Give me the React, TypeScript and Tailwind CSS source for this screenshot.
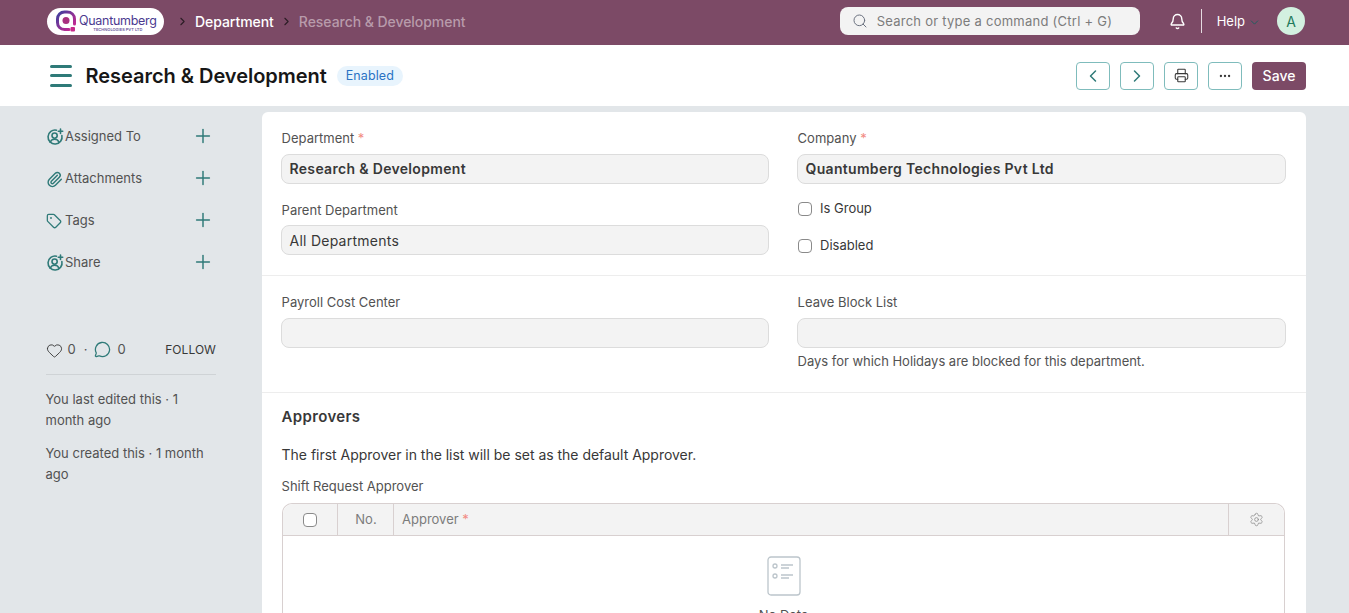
import React from "react"
import { Bell, ChevronDown, ChevronLeft, ChevronRight, MessageCircle, Heart, Paperclip, Plus, Printer, Search, Settings, Tag, Ellipsis } from "lucide-react"

const UserPlus = () => (
    <svg width="18" height="18" viewBox="0 0 18 18" fill="none" stroke="#2f7a78" strokeWidth="1.6" strokeLinecap="round" className="shrink-0">
        <path d="M10.5 2.2A7 7 0 1 0 15.9 7.6" />
        <circle cx="8.6" cy="7.6" r="2.6" />
        <path d="M4.2 14.2c.8-1.9 2.5-2.9 4.4-2.9s3.600 1 4.400 2.900" />
        <path d="M14.500 1v4.400M12.300 3.200h4.400" />
    </svg>
)

const Logo = () => (
    <div className="flex h-[27px] w-[117px] items-center rounded-full bg-white pl-[8px]">
        <svg width="24" height="24" viewBox="0 0 24 24" fill="none" className="shrink-0">
            <defs>
                <linearGradient id="logoQ" x1="0" y1="0" x2="1" y2="1">
                    <stop offset="0" stopColor="#3b3f9e" />
                    <stop offset="1" stopColor="#d6268f" />
                </linearGradient>
            </defs>
            <path d="M14 20.500H9.500C5.500 20.500 2.500 17.500 2.500 13.500V10C2.500 6 5.500 3 9.500 3H12C16.500 3 19.500 6 19.500 10V15" stroke="url(#logoQ)" strokeWidth="3" strokeLinecap="round" />
            <circle cx="11" cy="11.500" r="3.500" fill="#a8307f" />
            <rect x="15.500" y="18" width="4.500" height="4.500" rx="1" fill="#c72a8a" />
        </svg>
        <div className="mt-[3px] flex flex-col items-center">
            <span className="text-[12.5px] leading-[13px] tracking-[-0.3px] text-[#4b3a8f]">Quantumberg</span>
            <span className="text-[4px] leading-[5px] font-semibold whitespace-nowrap text-[#6b5aa0]">TECHNOLOGIES PVT LTD</span>
        </div>
    </div>
)

const Navbar = () => (
    <div className="flex h-[45px] items-center bg-[#7c4a66] pb-[3px] pl-[47px] pr-[44px]">
        <Logo />
        <ChevronRight size={13} strokeWidth={2} className="ml-[12px] text-[#2b1c25]" />
        <span className="ml-[6px] text-[14px] font-medium tracking-[-0.05px] text-white">Department</span>
        <ChevronRight size={13} strokeWidth={2} className="ml-[6px] text-[#2b1c25]" />
        <span className="ml-[6px] text-[14px] font-medium tracking-[-0.05px] text-[#b89bab]">Research &amp; Development</span>

        <div className="ml-auto flex h-[28px] w-[300px] items-center rounded-lg bg-[#f3f3f3] pl-[12px]">
            <Search size={16} strokeWidth={1.5} className="text-[#6b7280]" />
            <span className="ml-[9px] pt-[1px] text-[13px] tracking-[0.25px] text-[#7c7c7c]">Search or type a command (Ctrl + G)</span>
        </div>
        <Bell size={17} strokeWidth={2} className="ml-[29px] text-white" />
        <div className="ml-[15px] h-[24px] w-px bg-white/80"></div>
        <span className="ml-[15px] pt-[1px] text-[13px] text-white">Help</span>
        <ChevronDown size={13} strokeWidth={1.8} className="ml-[3px] mt-[3px] text-[#1f5f60]" />
        <div className="ml-[16px] flex h-[28px] w-[28px] items-center justify-center rounded-full bg-[#d3f0e0] text-[14px] text-[#1f7a5c]">A</div>
    </div>
)

const ActionButton = ({ children }: { children: React.ReactNode }) => (
    <button className="flex h-[28px] w-[34px] items-center justify-center rounded-[4px] border border-[#7fbcbc] bg-white text-[#2f7a78]">
        {children}
    </button>
)

const PageHeader = () => (
    <div className="flex h-[61px] items-center bg-white pl-[50px] pr-[43px]">
        <div className="flex h-[22px] w-[22px] flex-col justify-between">
            <div className="h-[3px] rounded-full bg-[#2f7a78]"></div>
            <div className="h-[3px] rounded-full bg-[#2f7a78]"></div>
            <div className="h-[3px] rounded-full bg-[#2f7a78]"></div>
        </div>
        <h1 className="ml-[13.5px] text-[20px] font-semibold tracking-[-0.03px] text-[#171717]">Research &amp; Development</h1>
        <span className="ml-[10px] flex h-[20px] w-[66px] items-center justify-center rounded-full bg-[#e8f4fd] pt-[1px] text-[12.5px] tracking-[0.1px] text-[#2a72c4]">Enabled</span>

        <div className="ml-auto flex items-center gap-[10px]">
            <ActionButton><ChevronLeft size={20} strokeWidth={1.8} /></ActionButton>
            <ActionButton><ChevronRight size={20} strokeWidth={1.8} /></ActionButton>
            <ActionButton><Printer size={15} strokeWidth={1.7} className="text-[#383838]" /></ActionButton>
            <ActionButton><Ellipsis size={14} strokeWidth={2} className="text-[#383838]" /></ActionButton>
            <button className="h-[28px] w-[54px] rounded-[4px] bg-[#7c4a66] text-[14px] font-medium text-white">Save</button>
        </div>
    </div>
)

const SidebarRow = ({ icon, label }: { icon: React.ReactNode; label: string }) => (
    <div className="flex h-[42px] items-center">
        <div className="flex w-[19px] justify-start">{icon}</div>
        <span className="ml-[0.5px] text-[13px] text-[#525252]">{label}</span>
        <Plus size={22} strokeWidth={1.6} className="ml-auto mr-[2px] -translate-y-px text-[#2f7a78]" />
    </div>
)

const Sidebar = () => (
    <div className="w-[262px] shrink-0 pl-[45.5px] pr-[46px] pt-[4px]">
        <SidebarRow icon={<UserPlus />} label="Assigned To" />
        <SidebarRow icon={<Paperclip size={17} strokeWidth={2} className="text-[#2f7a78]" />} label="Attachments" />
        <SidebarRow icon={<Tag size={16} strokeWidth={1.9} className="text-[#2f7a78]" />} label="Tags" />
        <SidebarRow icon={<UserPlus />} label="Share" />

        <div className="mt-[54px] flex h-[24px] items-center">
            <Heart size={17} strokeWidth={1.3} className="text-[#383838]" />
            <span className="ml-[5px] text-[13px] text-[#525252]">0</span>
            <span className="ml-[8px] text-[13px] text-[#525252]">·</span>
            <MessageCircle size={17} strokeWidth={1.8} className="ml-[7px] -translate-y-px text-[#2f7a78]" />
            <span className="ml-[6px] text-[13px] text-[#525252]">0</span>
            <span className="ml-auto text-[12px] tracking-[0.05px] text-[#383838]">FOLLOW</span>
        </div>
        <div className="mt-[12px] border-t border-[#cfd3d6]"></div>
        <p className="mt-[14px] text-[13px] leading-[20.8px] text-[#525252]">You last edited this · 1 month ago</p>
        <p className="mt-[12.5px] text-[13px] leading-[20.8px] text-[#525252]">You created this · 1 month ago</p>
    </div>
)

const Label = ({ text, required }: { text: string; required?: boolean }) => (
    <div className="h-[18px] pl-[0.6px] text-[13px] leading-[18px] text-[#525252]">
        {text}
        {required && <span className="text-[#f28b82]"> *</span>}
    </div>
)

const Input = ({ value, bold, tight }: { value?: string; bold?: boolean; tight?: boolean }) => (
    <div className={`flex h-[30px] items-center rounded-lg border border-[#dcdcdc] bg-[#f3f3f3] px-[7.5px] text-[14px] text-[#383838] ${tight ? "mt-[6px]" : "mt-[7px]"} ${bold ? "pb-[1px] font-semibold tracking-[0.32px]" : "tracking-[0.25px]"}`}>
        {value}
    </div>
)

const CheckRow = ({ label }: { label: string }) => (
    <div className="flex h-[18px] items-center pl-[1px]">
        <div className="h-[14px] w-[14px] rounded-[4px] border border-[#8a8a8a] bg-white"></div>
        <span className="ml-[8px] text-[13px] text-[#383838]">{label}</span>
    </div>
)

const DetailsSection = () => (
    <div className="grid h-[164px] grid-cols-[488px_489px] gap-x-[28px] border-b border-[#ededed] pl-[19px] pt-[17px]">
        <div>
            <Label text="Department" required />
            <Input value="Research & Development" bold />
            <div className="mt-[17px]">
                <Label text="Parent Department" />
                <Input value="All Departments" tight />
            </div>
        </div>
        <div>
            <Label text="Company" required />
            <Input value="Quantumberg Technologies Pvt Ltd" bold />
            <div className="mt-[16px]"><CheckRow label="Is Group" /></div>
            <div className="mt-[19px]"><CheckRow label="Disabled" /></div>
        </div>
    </div>
)

const CostSection = () => (
    <div className="grid h-[117px] grid-cols-[488px_489px] gap-x-[28px] border-b border-[#ededed] pl-[19px] pt-[17px]">
        <div>
            <Label text="Payroll Cost Center" />
            <Input />
        </div>
        <div>
            <Label text="Leave Block List" />
            <Input />
            <p className="mt-[4px] pl-[0.6px] text-[13px] leading-[18px] tracking-[-0.03px] text-[#525252]">Days for which Holidays are blocked for this department.</p>
        </div>
    </div>
)

const ApproversSection = () => (
    <div className="pl-[19px] pr-[20px] pt-[14px]">
        <h2 className="pl-[0.6px] text-[15px] leading-[20px] font-semibold tracking-[0.35px] text-[#383838]">Approvers</h2>
        <p className="mt-[18px] pl-[0.6px] text-[14px] leading-[20px] tracking-[-0.02px] text-[#383838]">The first Approver in the list will be set as the default Approver.</p>
        <div className="mt-[12px]"><Label text="Shift Request Approver" /></div>
        <div className="mx-px mt-[8px] rounded-t-[10px] border-x border-t border-[#d8d0d0]">
            <div className="flex h-[32px] items-center rounded-t-[10px] border-b border-[#d8d0d0] bg-[#f3f3f3] text-[13px] text-[#7c7c7c]">
                <div className="flex h-full w-[55px] items-center justify-center border-r border-[#d8d0d0]">
                    <div className="h-[14px] w-[14px] rounded-[4px] border border-[#8a8a8a] bg-white"></div>
                </div>
                <div className="flex h-full w-[56px] items-center justify-center border-r border-[#d8d0d0] pl-[1px]">No.</div>
                <div className="flex-1 pl-[8px]">Approver <span className="text-[#f28b82]">*</span></div>
                <div className="flex h-full w-[56px] items-center justify-center border-l border-[#d8d0d0]">
                    <Settings size={15} strokeWidth={1.2} className="text-[#8a8a8a]" />
                </div>
            </div>
            <div className="flex h-[120px] flex-col items-center bg-white pt-[20px]">
                <svg width="34" height="40" viewBox="0 0 34 40" fill="none" stroke="#bcc5cb" strokeWidth="1.300">
                    <rect x="1" y="1" width="32" height="38" rx="3" />
                    <circle cx="8" cy="10" r="2" />
                    <circle cx="8" cy="20" r="2" />
                    <path d="M14 9h12M14 12h8M14 19h12M14 22h8" />
                </svg>
                <span className="mt-[10px] text-[13px] text-[#525252]">No Data</span>
            </div>
        </div>
    </div>
)

export default function App() {
    return (
        <div className="h-[613px] overflow-hidden bg-[#e2e6e9] font-['Inter',sans-serif]">
            <Navbar />
            <PageHeader />
            <div className="mt-[6px] flex">
                <Sidebar />
                <div className="w-[1044px] shrink-0 rounded-t-[6px] bg-white">
                    <DetailsSection />
                    <CostSection />
                    <ApproversSection />
                </div>
            </div>
        </div>
    )
}
